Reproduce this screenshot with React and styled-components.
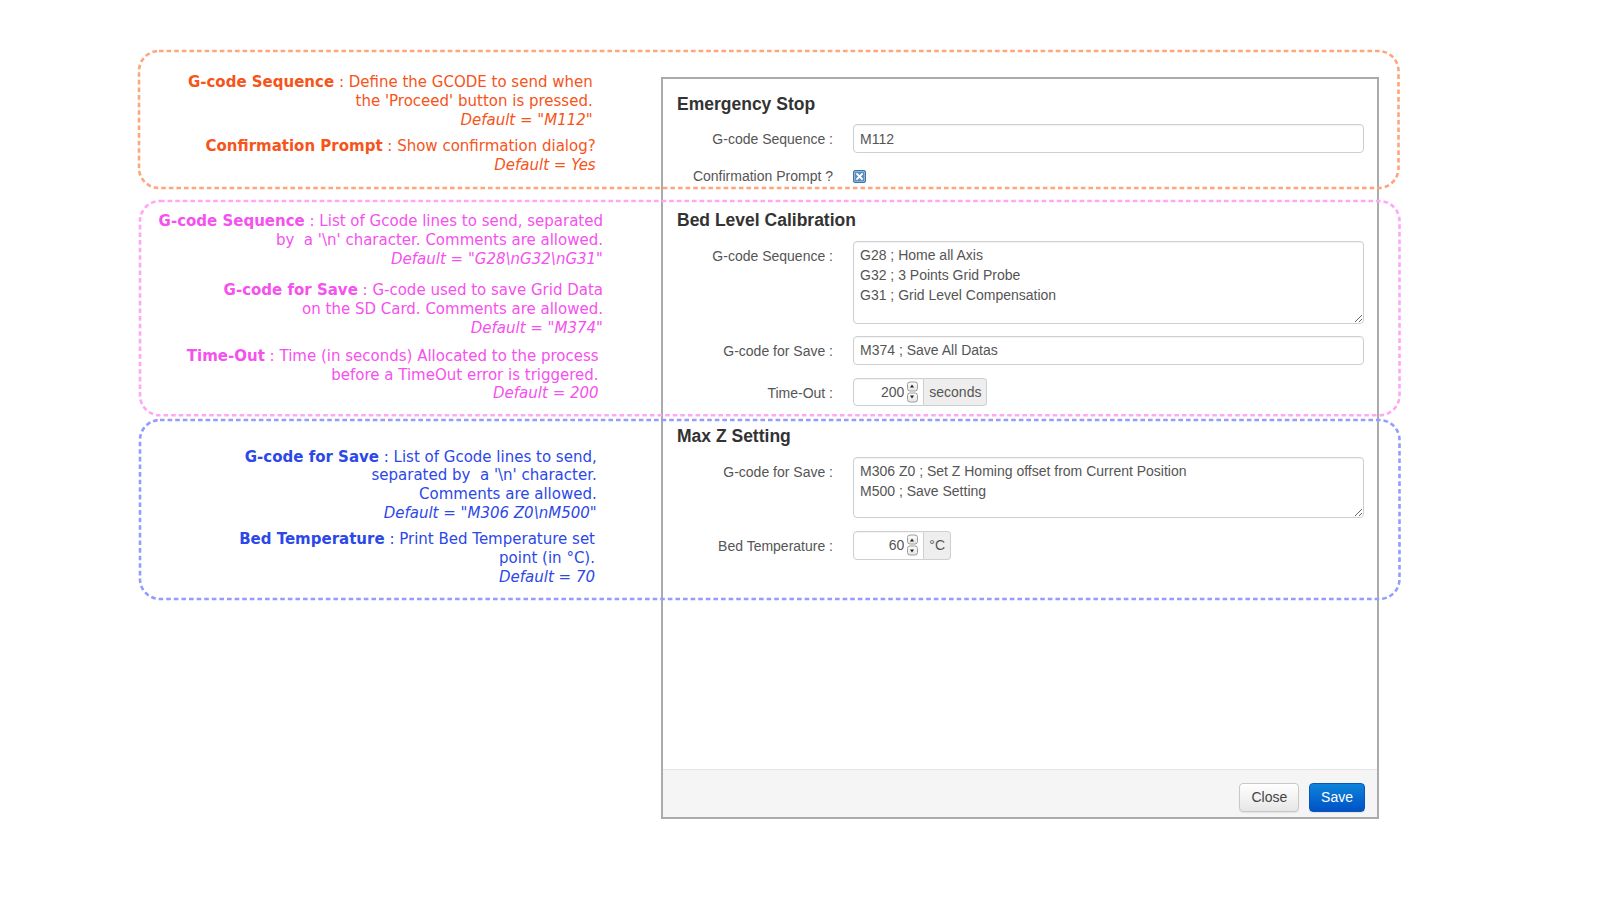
import React from "react";
import styled, { createGlobalStyle } from "styled-components";

const Global = createGlobalStyle`
  html, body { margin: 0; padding: 0; background: #fff; }
  body { width: 1600px; height: 900px; overflow: hidden; }
  * { box-sizing: border-box; }
`;

const Page = styled.div`
  position: relative;
  width: 1600px;
  height: 900px;
  display: flex;
  align-items: flex-start;
`;

const Notes = styled.div`
  width: 603px;
  padding-top: 73.2px;
  display: flex;
  flex-direction: column;
  font-family: "DejaVu Sans", "Liberation Sans", sans-serif;
  font-size: 15px;
  line-height: 18.8px;
  text-align: right;
`;

const NoteGroup = styled.div`
  margin-top: ${(p) => p.$top || 0}px;
  color: ${(p) => p.$color};
  line-height: ${(p) => p.$lead || 18.8}px;
`;

const Note = styled.p`
  margin: ${(p) => p.$space || 0}px 0 0;
  padding-right: ${(p) => p.$inset || 0}px;
  white-space: nowrap;
  b { font-weight: bold; }
  i { font-style: italic; }
`;

const Frame = styled.div`
  position: absolute;
  left: ${(p) => p.$x}px;
  top: ${(p) => p.$y}px;
  width: ${(p) => p.$w}px;
  height: ${(p) => p.$h}px;
  pointer-events: none;
  z-index: 5;
  svg { display: block; width: 100%; height: 100%; overflow: visible; }
`;

const Dialog = styled.div`
  margin-top: 76.5px;
  margin-left: 58px;
  width: 718px;
  height: 742.5px;
  border: 2px solid #ababab;
  background: #fff;
  display: flex;
  flex-direction: column;
  font-family: "Liberation Sans", Arial, sans-serif;
  font-size: 14px;
  color: #555;
`;

const Body = styled.div`
  flex: 1;
  padding: 15.4px 13px 0 14px;
`;

const Section = styled.section`
  margin-top: ${(p) => p.$top || 0}px;
`;

const Heading = styled.h3`
  margin: 0 0 10.5px;
  font-size: 17.5px;
  line-height: 20px;
  font-weight: bold;
  color: #333;
`;

const Row = styled.div`
  display: grid;
  grid-template-columns: 156px 1fr;
  column-gap: 20px;
  align-items: start;
  margin-top: ${(p) => p.$gap || 0}px;
`;

const Label = styled.label`
  text-align: right;
  line-height: 20px;
  padding-top: ${(p) => (p.$flat ? 0 : 5)}px;
  color: #555;
  white-space: nowrap;
`;

const Field = styled.input`
  display: block;
  width: 100%;
  height: 28.5px;
  padding: 0 6px;
  border: 1px solid #cfcfcf;
  border-radius: 4px;
  box-shadow: inset 0 1px 1px rgba(0, 0, 0, 0.05);
  font-family: inherit;
  font-size: 14px;
  color: #555;
  background: #fff;
  outline: none;
`;

const Area = styled.textarea`
  display: block;
  width: 100%;
  height: ${(p) => p.$h}px;
  padding: 3px 6px;
  border: 1px solid #cfcfcf;
  border-radius: 4px;
  box-shadow: inset 0 1px 1px rgba(0, 0, 0, 0.05);
  font-family: inherit;
  font-size: 14px;
  line-height: 20px;
  color: #555;
  resize: vertical;
  overflow: hidden;
  outline: none;
`;

const CheckCell = styled.div`
  height: 20px;
  display: flex;
  align-items: center;
`;

const Check = styled.span`
  width: 13px;
  height: 13px;
  border-radius: 2px;
  background: #5b8fbd;
  border: 1px solid #3f74a6;
  box-shadow: inset 0 0 0 1px #8db6da;
  display: flex;
  align-items: center;
  justify-content: center;
`;

const Group = styled.div`
  display: flex;
  height: 28.5px;
`;

const NumberWrap = styled.div`
  position: relative;
  width: 71.3px;
  height: 100%;
`;

const NumberField = styled(Field)`
  height: 100%;
  text-align: right;
  padding-right: 19px;
  border-radius: 4px 0 0 4px;
`;

const Spin = styled.div`
  position: absolute;
  right: 6.5px;
  top: 50%;
  transform: translateY(-50%);
  display: flex;
  flex-direction: column;
  gap: 1px;
`;

const SpinBtn = styled.span`
  width: 11px;
  height: 10px;
  border: 1px solid #9a9a9a;
  border-radius: 3px;
  background: linear-gradient(#fdfdfd, #e4e4e4);
  display: flex;
  align-items: center;
  justify-content: center;
  &::after {
    content: "";
    border-left: 2.5px solid transparent;
    border-right: 2.5px solid transparent;
    ${(p) =>
      p.$down
        ? "border-top: 3px solid #222;"
        : "border-bottom: 3px solid #222;"}
  }
`;

const Addon = styled.span`
  display: flex;
  align-items: center;
  padding: 0 5px;
  border: 1px solid #cfcfcf;
  border-left: 0;
  border-radius: 0 4px 4px 0;
  background: #eee;
  color: #555;
  font-size: 14px;
`;

const Footer = styled.div`
  height: 48.5px;
  border-top: 1px solid #e3e3e3;
  background: #f5f5f5;
  display: flex;
  justify-content: flex-end;
  align-items: flex-start;
  gap: 9.4px;
  padding: 13.3px 11.7px 0 0;
`;

const Button = styled.button`
  height: 29.4px;
  min-width: ${(p) => p.$w}px;
  border-radius: 4px;
  font-family: "Liberation Sans", Arial, sans-serif;
  font-size: 14px;
  padding: 0 10px;
  cursor: pointer;
  border: 1px solid ${(p) => (p.$primary ? "#0a56b8" : "#c8c8c8")};
  color: ${(p) => (p.$primary ? "#fff" : "#444")};
  background: ${(p) =>
    p.$primary
      ? "linear-gradient(#0c84d9, #0052c6)"
      : "linear-gradient(#ffffff, #e6e6e6)"};
  box-shadow: 0 1px 1px rgba(0, 0, 0, 0.08);
`;

function DashFrame({ x, y, w, h, color }) {
  return (
    <Frame $x={x} $y={y} $w={w} $h={h}>
      <svg>
        <rect
          x="0"
          y="0"
          width="100%"
          height="100%"
          rx="20"
          ry="20"
          fill="none"
          stroke={color}
          strokeWidth="2.6"
          strokeDasharray="4.6 3"
        />
      </svg>
    </Frame>
  );
}

function Spinner() {
  return (
    <Spin>
      <SpinBtn />
      <SpinBtn $down />
    </Spin>
  );
}

export default function App() {
  return (
    <>
      <Global />
      <Page>
        <Notes>
          <NoteGroup $color="#f6541a">
            <Note $inset={10.3}>
              <b>G-code Sequence</b> : Define the GCODE to send when
              <br />
              the 'Proceed' button is pressed.
              <br />
              <i>Default = "M112"</i>
            </Note>
            <Note $space={7.8} $inset={7.3}>
              <b>Confirmation Prompt</b> : Show confirmation dialog?
              <br />
              <i>Default = Yes</i>
            </Note>
          </NoteGroup>

          <NoteGroup $color="#f551ee" $top={37.4}>
            <Note>
              <b>G-code Sequence</b> : List of Gcode lines to send, separated
              <br />
              {"by\u00a0 a '\\n' character. Comments are allowed."}
              <br />
              <i>{'Default = "G28\\nG32\\nG31"'}</i>
            </Note>
            <Note $space={12.7}>
              <b>G-code for Save</b> : G-code used to save Grid Data
              <br />
              on the SD Card. Comments are allowed.
              <br />
              <i>Default = "M374"</i>
            </Note>
            <Note $space={9} $inset={4.4}>
              <b>Time-Out</b> : Time (in seconds) Allocated to the process
              <br />
              before a TimeOut error is triggered.
              <br />
              <i>Default = 200</i>
            </Note>
          </NoteGroup>

          <NoteGroup $color="#2c48e8" $top={44.5} $lead={18.6}>
            <Note $inset={6.3}>
              <b>G-code for Save</b> : List of Gcode lines to send,
              <br />
              {"separated by\u00a0 a '\\n' character."}
              <br />
              Comments are allowed.
              <br />
              <i>{'Default = "M306 Z0\\nM500"'}</i>
            </Note>
            <Note $space={8.4} $inset={8}>
              <b>Bed Temperature</b> : Print Bed Temperature set
              <br />
              point (in °C).
              <br />
              <i>Default = 70</i>
            </Note>
          </NoteGroup>
        </Notes>

        <Dialog>
          <Body>
            <Section>
              <Heading>Emergency Stop</Heading>
              <Row>
                <Label>G-code Sequence :</Label>
                <Field readOnly value="M112" />
              </Row>
              <Row $gap={13.3}>
                <Label $flat>Confirmation Prompt ?</Label>
                <CheckCell>
                  <Check>
                    <svg width="7" height="7" viewBox="0 0 7 7">
                      <path
                        d="M1 1 L6 6 M6 1 L1 6"
                        stroke="#fff"
                        strokeWidth="1.8"
                        strokeLinecap="square"
                      />
                    </svg>
                  </Check>
                </CheckCell>
              </Row>
            </Section>

            <Section $top={24.3}>
              <Heading>Bed Level Calibration</Heading>
              <Row>
                <Label>G-code Sequence :</Label>
                <Area
                  $h={82.6}
                  readOnly
                  value={
                    "G28 ; Home all Axis\nG32 ; 3 Points Grid Probe\nG31 ; Grid Level Compensation"
                  }
                />
              </Row>
              <Row $gap={12.5}>
                <Label>G-code for Save :</Label>
                <Field readOnly value="M374 ; Save All Datas" />
              </Row>
              <Row $gap={13}>
                <Label>Time-Out :</Label>
                <Group>
                  <NumberWrap>
                    <NumberField readOnly value="200" />
                    <Spinner />
                  </NumberWrap>
                  <Addon>seconds</Addon>
                </Group>
              </Row>
            </Section>

            <Section $top={20.2}>
              <Heading>Max Z Setting</Heading>
              <Row>
                <Label>G-code for Save :</Label>
                <Area
                  $h={61}
                  readOnly
                  value={
                    "M306 Z0 ; Set Z Homing offset from Current Position\nM500 ; Save Setting"
                  }
                />
              </Row>
              <Row $gap={13.4}>
                <Label>Bed Temperature :</Label>
                <Group>
                  <NumberWrap>
                    <NumberField readOnly value="60" />
                    <Spinner />
                  </NumberWrap>
                  <Addon>°C</Addon>
                </Group>
              </Row>
            </Section>
          </Body>
          <Footer>
            <Button $w={60}>Close</Button>
            <Button $w={56.6} $primary>
              Save
            </Button>
          </Footer>
        </Dialog>

        <DashFrame x={139} y={51} w={1259.5} h={137} color="#ffa57c" />
        <DashFrame x={139.5} y={200.5} w={1259.5} h={214.3} color="#ffa6f6" />
        <DashFrame x={139.5} y={420} w={1259.5} h={179} color="#919dff" />
      </Page>
    </>
  );
}
